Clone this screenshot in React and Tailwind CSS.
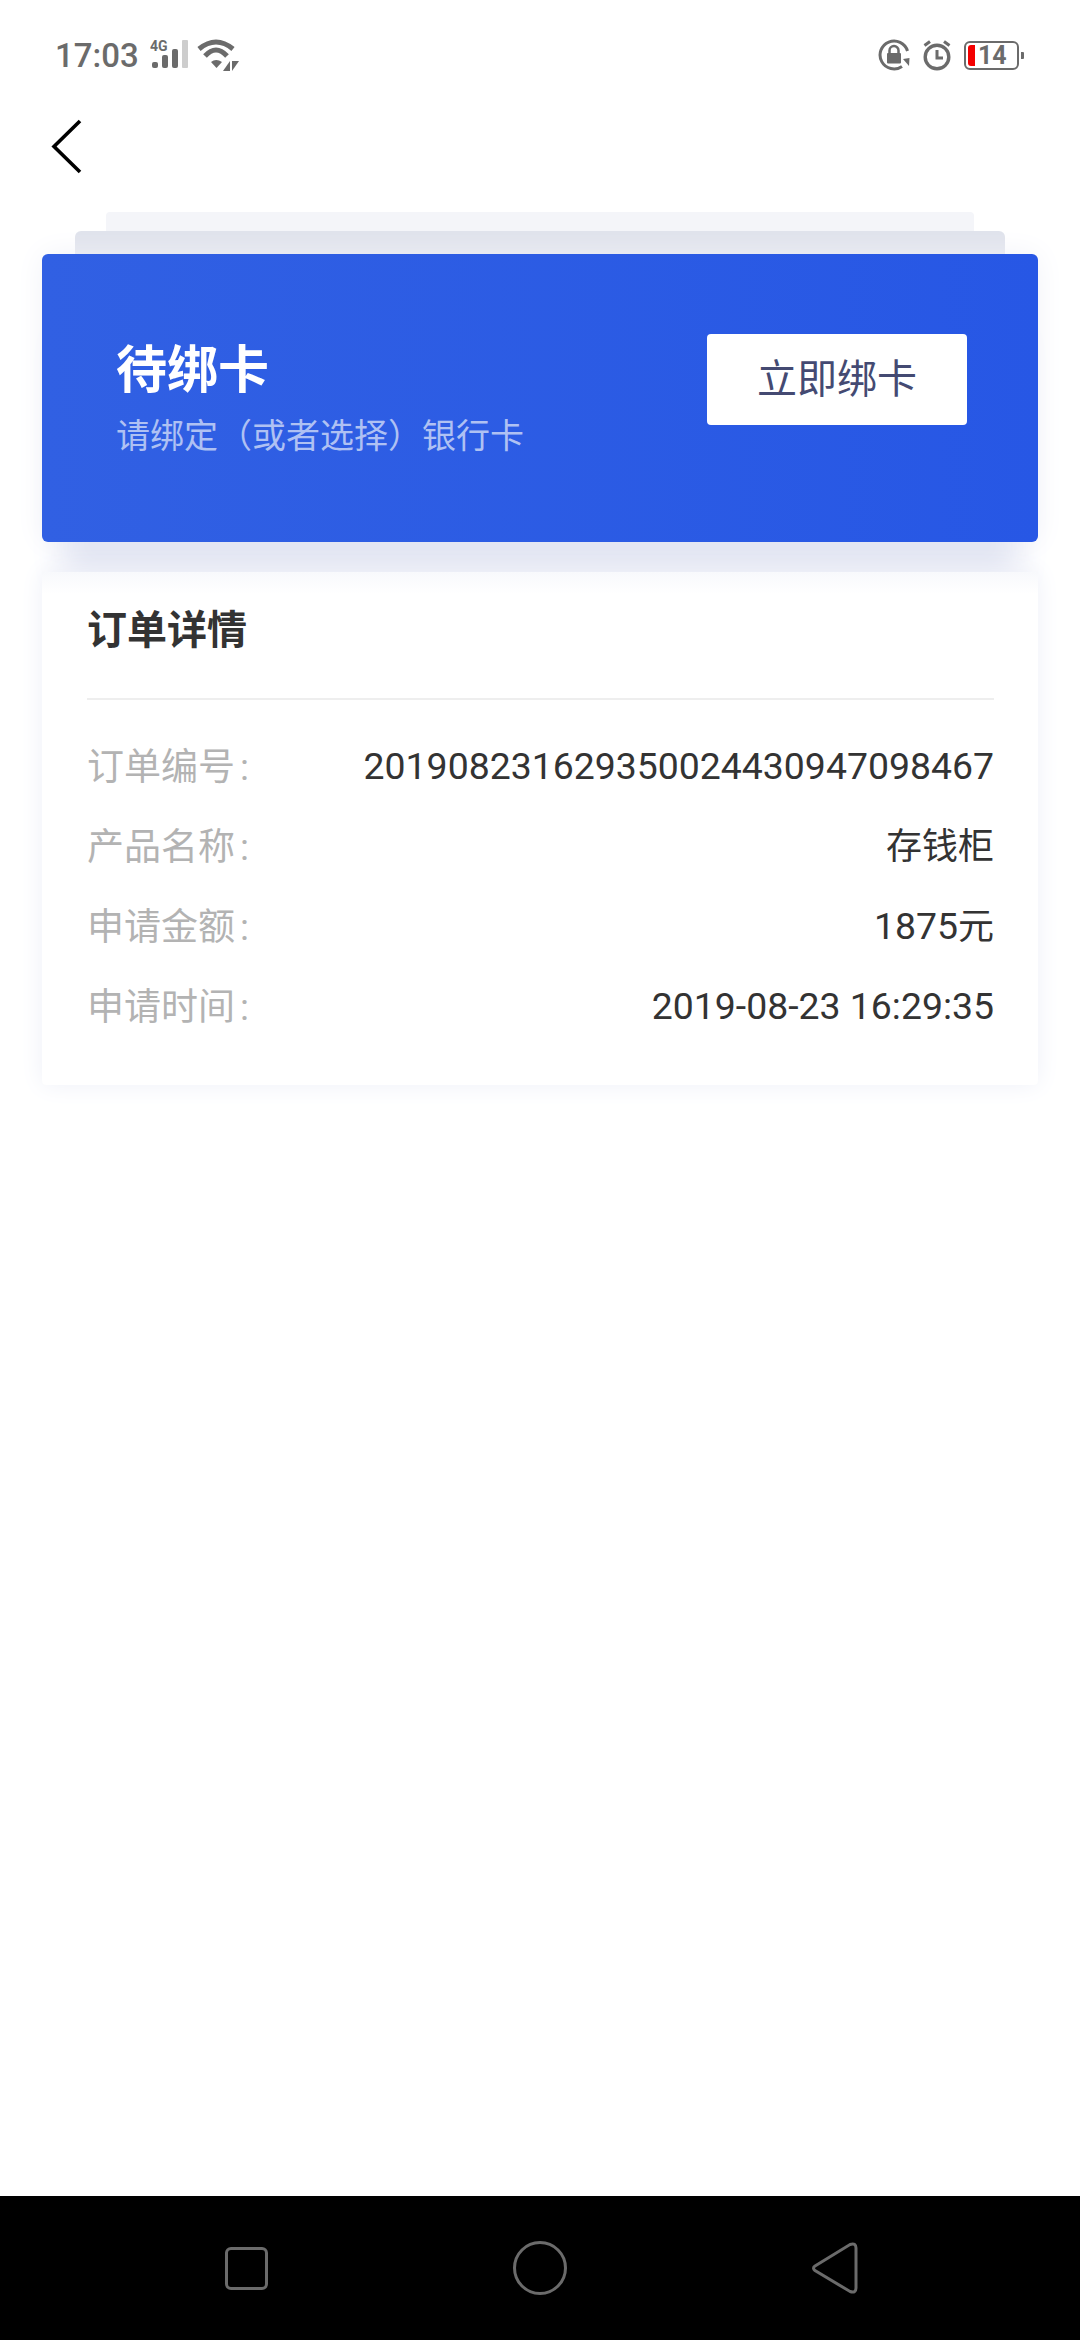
import React from 'react';

const rows = [
  { label: '订单编号', value: '201908231629350024430947098467' },
  { label: '产品名称', value: <span className="text-[36px]">存钱柜</span> },
  { label: '申请金额', value: <>1875<span className="text-[36px]">元</span></> },
  { label: '申请时间', value: '2019-08-23 16:29:35' },
];

function StatusBar() {
  return (
    <div className="flex h-[110px] items-center justify-between pl-[55px] pr-[56px] text-[#6b6b6b]">
      <div className="flex items-center">
        <span className="text-[33px] font-medium leading-none">17:03</span>
        {/* signal */}
        <svg className="ml-[11px]" width="40" height="32" viewBox="0 0 40 32">
          <text x="0" y="12" fontSize="14" fontWeight="700" fontFamily="Roboto, sans-serif" fill="#6b6b6b">4G</text>
          <rect x="2" y="23" width="6" height="6" rx="2" fill="#6b6b6b" />
          <rect x="12" y="16" width="6" height="13" rx="2" fill="#6b6b6b" />
          <rect x="22" y="10" width="6" height="19" rx="2" fill="#6b6b6b" />
          <rect x="32" y="1" width="6" height="28" rx="1" fill="#cdcdcd" />
        </svg>
        {/* wifi */}
        <svg className="ml-[6px]" width="44" height="34" viewBox="0 0 44 34" fill="none">
          <path d="M3 11 Q20 -3 37 11" stroke="#6b6b6b" strokeWidth="5" />
          <path d="M9 18 Q20 6 31 18" stroke="#6b6b6b" strokeWidth="5" />
          <path d="M15 24 Q20 20 26 24 L20.500 30 Z" fill="#6b6b6b" />
          <path d="M34 23 L34 33 L27 33 Z" fill="#6b6b6b" />
          <path d="M36 23 L43 23 L36 33 Z" fill="#6b6b6b" />
        </svg>
      </div>
      <div className="flex items-center">
        {/* rotation lock */}
        <svg width="32" height="32" viewBox="0 0 32 32" fill="none">
          <path d="M29.500 12 A14 14 0 1 0 24 27.500" stroke="#6b6b6b" strokeWidth="3" />
          <path d="M25 20 L31.500 19 L31 27 Z" fill="#6b6b6b" />
          <rect x="9" y="14" width="14" height="10.500" rx="1" fill="#6b6b6b" />
          <path d="M11.500 14 V11.500 A4.500 4.500 0 0 1 20.500 11.500 V14" stroke="#6b6b6b" strokeWidth="2.500" />
        </svg>
        {/* alarm */}
        <svg className="ml-[12px]" width="30" height="32" viewBox="0 0 30 32" fill="none">
          <circle cx="15" cy="18" r="11.800" stroke="#6b6b6b" strokeWidth="3.400" />
          <path d="M15 11 V19 H21" stroke="#6b6b6b" strokeWidth="3" />
          <path d="M2.500 6.500 L8 2.500" stroke="#6b6b6b" strokeWidth="3" />
          <path d="M27.500 6.500 L22 2.500" stroke="#6b6b6b" strokeWidth="3" />
        </svg>
        {/* battery */}
        <div className="ml-[12px] flex items-center">
          <div className="flex h-[29px] w-[55px] items-center rounded-[6px] border-[2px] border-[#6b6b6b] pl-[2px]">
            <div className="h-[21px] w-[7px] rounded-l-[3px] bg-[#f40000]" />
            <span className="ml-[3px] text-[25px] font-bold leading-none">14</span>
          </div>
          <div className="ml-[2px] h-[7px] w-[3px] rounded-r-[1px] bg-[#6b6b6b]" />
        </div>
      </div>
    </div>
  );
}

export default function App() {
  return (
    <div className="flex h-[2340px] w-[1080px] flex-col overflow-hidden bg-white font-['Roboto','Noto_Sans_CJK_SC',sans-serif]">
      <StatusBar />

      {/* back */}
      <div className="flex h-[102px] items-start pl-[50px] pt-[9px]">
        <svg width="34" height="56" viewBox="0 0 34 56" fill="none">
          <path d="M30 2 L4 27.500 L30 53" stroke="#000" strokeWidth="3.600" />
        </svg>
      </div>

      {/* stacked cards */}
      <div className="mx-[106px] h-[19px] rounded-t-[4px] bg-[#f4f5f9]" />
      <div className="mx-[75px] h-[23px] rounded-t-[6px] bg-[#dfe2eb]" />
      <div className="mx-[42px] flex h-[288px] items-start justify-between rounded-[6px] bg-linear-to-r from-[#3160e3] to-[#2757e5] pl-[74px] pr-[71px] shadow-[0_60px_30px_-20px_#e3e6f3,0_0_30px_#f1f2f8]">
        <div className="flex flex-col pt-[87px]">
          <span className="text-[51px] font-bold leading-[60px] text-white">待绑卡</span>
          <span className="mt-[13px] text-[34px] leading-[44px] text-[#afc1f3]">请绑定（或者选择）银行卡</span>
        </div>
        <button className="mt-[80px] h-[91px] w-[260px] rounded-[4px] bg-white text-[40px] text-[#444a72]">立即绑卡</button>
      </div>

      {/* order details */}
      <div className="mx-[42px] mt-[30px] h-[513px] rounded-b-[4px] bg-white bg-linear-to-b from-[#f8f9fc] to-white to-[22px] pl-[45px] pr-[44px] shadow-[0_0_24px_#eef0f8]">
        <div className="flex h-[128px] items-center border-b-[2px] border-[#eeeeee] pb-[8px] text-[40px] font-bold leading-none text-[#333333]">
          订单详情
        </div>
        <div className="pt-[27px]">
          {rows.map((row) => (
            <div key={row.label} className="flex h-[80px] items-center justify-between text-[37px] leading-none">
              <span className="text-[#b3b3b3]">{row.label}<span className="ml-[5px]">:</span></span>
              <span className="text-[37.4px] text-[#333333]">{row.value}</span>
            </div>
          ))}
        </div>
      </div>

      <div className="flex-1" />

      {/* nav bar */}
      <div className="relative flex h-[144px] items-center bg-black pl-[225px]">
        <div className="h-[43px] w-[43px] rounded-[6px] border-[3px] border-[#6b6b6b]" />
        <div className="ml-[245px] h-[54px] w-[54px] rounded-full border-[3px] border-[#6b6b6b]" />
        <svg className="ml-[245px]" width="46" height="52" viewBox="0 0 46 52" fill="none">
          <path d="M3 24 L38 2.500 Q44 0.500 44 6 V46 Q44 51.500 38 49.500 L3 28.500 Q0 26 3 24 Z" stroke="#6b6b6b" strokeWidth="3" />
        </svg>
      </div>
    </div>
  );
}
